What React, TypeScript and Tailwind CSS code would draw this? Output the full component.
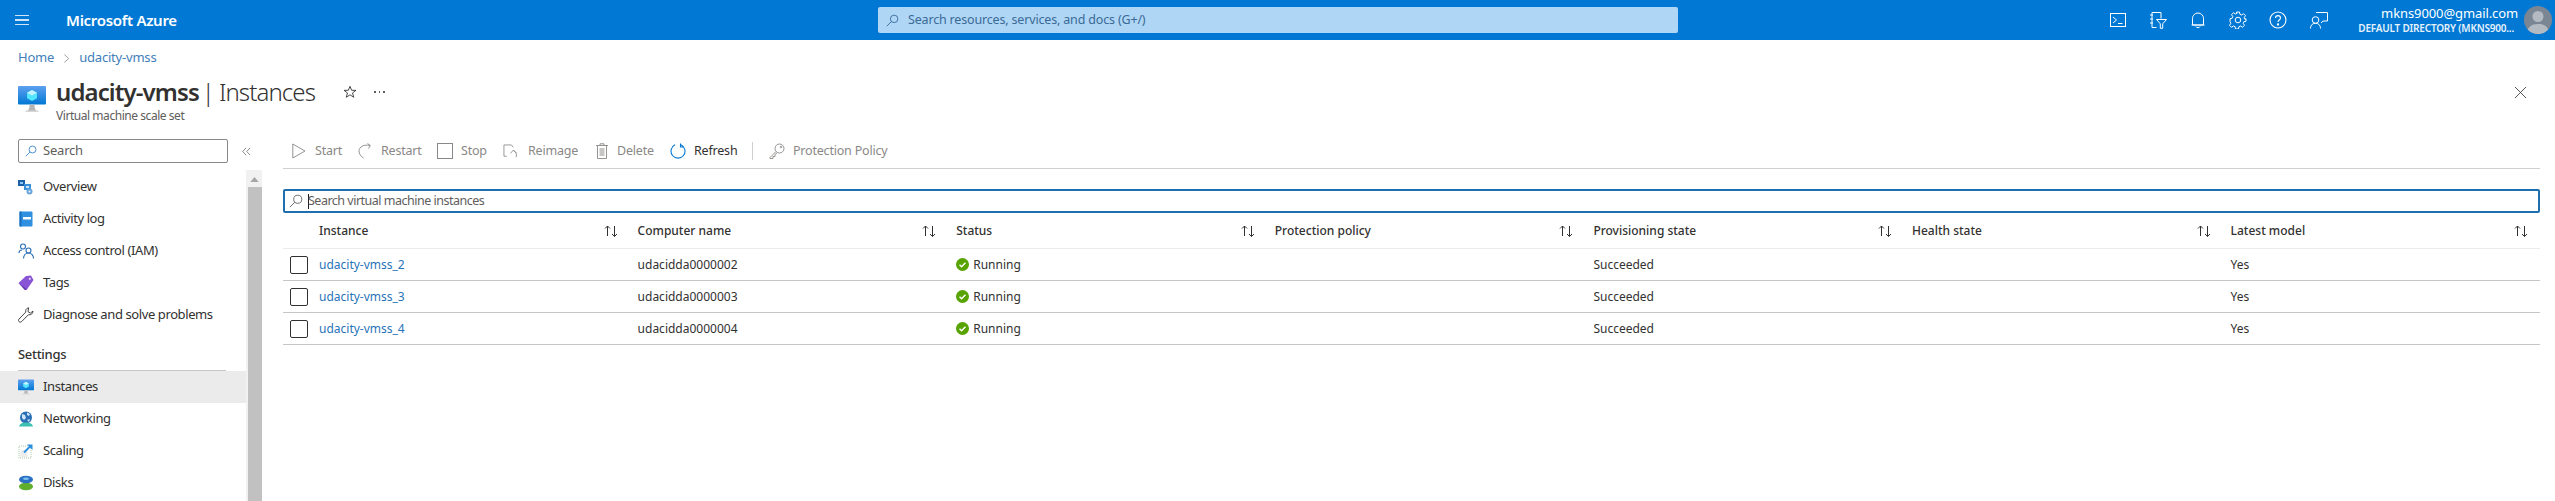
import React from "react";

const FONT = "font-['Noto_Sans','Open_Sans',sans-serif]";

function SearchGlass({ className = "", color = "#323130" }: { className?: string; color?: string }) {
  return (
    <svg viewBox="0 0 16 16" className={className} fill="none" stroke={color} strokeWidth="1">
      <circle cx="10" cy="6" r="4.6" />
      <path d="M6.7 9.3 1 15" />
    </svg>
  );
}

function SortIcon() {
  return (
    <svg viewBox="0 0 16 14" className="w-4 h-[14px] shrink-0" fill="none" stroke="#323130" strokeWidth="1">
      <path d="M4.5 12V2M2 4.5 4.5 2 7 4.5" />
      <path d="M11.5 2v10.5M9 10l2.5 2.5L14 10" />
    </svg>
  );
}

function MonitorIcon({ className = "" }: { className?: string }) {
  return (
    <svg viewBox="0 0 28 28" className={className}>
      <defs>
        <linearGradient id="mon" x1="0" y1="0" x2="0" y2="1">
          <stop offset="0" stopColor="#5ea0ef" />
          <stop offset="1" stopColor="#0078d4" />
        </linearGradient>
      </defs>
      <rect x="0" y="1" width="28" height="18.5" rx="1" fill="url(#mon)" />
      <path d="M9 26c2-1 2.5-3 2.5-6.500h5c0 3.500.5 5.500 2.500 6.500z" fill="#b6b6b6" />
      <rect x="7.500" y="25.500" width="13" height="1.500" fill="#d6d6d6" />
      <path d="M14 5l5 2.800v5.400L14 16l-5-2.800V7.800z" fill="#50e6ff" />
      <path d="M14 5l5 2.800-5 2.800-5-2.800z" fill="#c3f1ff" />
    </svg>
  );
}

const navIcons: Record<string, React.ReactNode> = {
  Overview: (
    <svg viewBox="0 0 16 16" className="w-4 h-4">
      <rect x="0" y="1" width="7" height="6" fill="#1b5fa8" />
      <rect x="2" y="3" width="3" height="2" fill="#8fc8f5" />
      <rect x="6" y="5" width="7" height="6" fill="#3b8fd9" />
      <rect x="8" y="7" width="3" height="2" fill="#c9e6fb" />
      <circle cx="11.500" cy="12.500" r="3" fill="#6aa6dd" />
      <circle cx="11.500" cy="12.500" r="1" fill="#e6f3fc" />
    </svg>
  ),
  "Activity log": (
    <svg viewBox="0 0 16 16" className="w-4 h-4">
      <rect x="1.500" y="0.500" width="13" height="15" rx="1" fill="#2f8fe0" />
      <rect x="1.500" y="0.500" width="2" height="15" fill="#1a6fc0" />
      <rect x="5" y="6" width="8" height="2.500" fill="#ffffff" />
    </svg>
  ),
  "Access control (IAM)": (
    <svg viewBox="0 0 16 16" className="w-4 h-4" fill="none" stroke="#2a6fb5" strokeWidth="1.100">
      <circle cx="5" cy="3.500" r="2.500" />
      <circle cx="10.500" cy="7.500" r="2.500" />
      <path d="M1 10c0-2 1-3 3-3" />
      <path d="M5.500 15.500c0-3 2-5.500 5-5.500s5 2.500 5 5.500" />
    </svg>
  ),
  Tags: (
    <svg viewBox="0 0 16 16" className="w-4 h-4">
      <path d="M0.500 8 8 1l5-.5 2.500 4.500L9 14.500 7 15z" fill="#8a54d6" />
      <path d="M0.500 8 9 14.500 7 15z" fill="#5e2fa8" />
      <circle cx="11.800" cy="3.800" r="1.100" fill="#e6dbf7" />
    </svg>
  ),
  "Diagnose and solve problems": (
    <svg viewBox="0 0 16 16" className="w-4 h-4" fill="none" stroke="#323130" strokeWidth="0.900">
      <path d="M10.500.8c-2 .3-3.300 2.200-2.700 4.300L1 12c-.8 1-.6 2 0 2.600s1.700.8 2.600 0l6.900-6.900c2.200.6 4.500-1 4.500-3.600l-2.700 2-2.300-1.400.6-3.900z" />
    </svg>
  ),
  Instances: <MonitorIcon className="w-4 h-4" />,
  Networking: (
    <svg viewBox="0 0 16 16" className="w-4 h-4">
      <circle cx="8" cy="6.500" r="6" fill="#2a6fb5" />
      <path d="M4 3l3 1 1 3-2 2-2-2zM9 1.500l3 1.500-1 2-2-1zM9 9l3-1-1 3z" fill="#cfe6f8" />
      <path d="M1 15.500c1-3 3-4 7-4s6 1 7 4z" fill="#3cc0b0" />
    </svg>
  ),
  Scaling: (
    <svg viewBox="0 0 16 16" className="w-4 h-4" fill="none">
      <rect x="1" y="3" width="12" height="12" stroke="#a8c8a0" strokeWidth="1" strokeDasharray="1 1" />
      <rect x="2.500" y="7" width="7" height="7" fill="#ececec" />
      <path d="M6 9.500 13 2.500" stroke="#2b8fe0" strokeWidth="1.800" />
      <path d="M9 1.500h5.500V7z" fill="#2b8fe0" />
    </svg>
  ),
  Disks: (
    <svg viewBox="0 0 16 16" className="w-4 h-4">
      <ellipse cx="8" cy="11.500" rx="7" ry="3.800" fill="#5fae2e" />
      <ellipse cx="8" cy="4.500" rx="7" ry="3.800" fill="#2a6fc4" />
      <ellipse cx="8" cy="3.800" rx="3" ry="1.200" fill="#7cc0f0" />
    </svg>
  ),
};

function NavItem({ label, active = false }: { label: string; active?: boolean }) {
  return (
    <div className={`h-8 flex items-center pl-[18px] ${active ? "bg-[#ebebeb]" : ""}`}>
      <span className="w-[25px] shrink-0 flex">{navIcons[label]}</span>
      <span className="text-[13px] tracking-[-0.4px] text-[#323130] whitespace-nowrap">{label}</span>
    </div>
  );
}

const gray = "#8a8886";

function ToolItem({ icon, label, iconW, gap, w, dark = false }: { icon: React.ReactNode; label: string; iconW: string; gap: string; w: string; dark?: boolean }) {
  return (
    <div className={`flex items-center shrink-0 ${w}`}>
      <span className={`flex justify-center shrink-0 ${iconW} ${gap}`}>{icon}</span>
      <span className={`text-[12.500px] tracking-[-0.200px] whitespace-nowrap ${dark ? "text-[#323130]" : "text-[#8a8886]"}`}>{label}</span>
    </div>
  );
}

const columns = ["Instance", "Computer name", "Status", "Protection policy", "Provisioning state", "Health state", "Latest model"];
const rows = [
  { n: "udacity-vmss_2", c: "udacidda0000002" },
  { n: "udacity-vmss_3", c: "udacidda0000003" },
  { n: "udacity-vmss_4", c: "udacidda0000004" },
];
const gridCols = "grid grid-cols-[36px_repeat(6,318.6px)_1fr]";
const cellText = "text-[12px] text-[#323130] whitespace-nowrap";

function HeaderIcons() {
  const cls = "w-[18px] h-[18px]";
  return (
    <div className="flex items-center gap-[22px] shrink-0">
      <svg viewBox="0 0 18 18" className={cls} fill="none" stroke="#fff" strokeWidth="1">
        <rect x="1.500" y="2.500" width="15" height="13" />
        <path d="M4 6l3.500 3L4 12M9 12.500h4.500" />
      </svg>
      <svg viewBox="0 0 18 18" className={cls} fill="none" stroke="#fff" strokeWidth="1">
        <path d="M3 1.500h9v6M3 1.500v15h4.500" />
        <path d="M1 4h3M1 8h3M1 12h3" />
        <path d="M7.500 8.500h10l-3.800 4.300v4.500h-2.400v-4.500z" />
      </svg>
      <svg viewBox="0 0 18 18" className={cls} fill="none" stroke="#fff" strokeWidth="1">
        <path d="M3.500 14V7.500a5.500 5.500 0 0 1 11 0V14zM2.500 14h13M7 15.500c.3 1.500 3.700 1.500 4 0" />
      </svg>
      <svg viewBox="0 0 18 18" className={cls} fill="none" stroke="#fff" strokeWidth="1">
        <circle cx="9" cy="9" r="2.800" />
        <path d="M7.500 1h3l.4 2.300 1.700.7 1.900-1.300 2 2-1.300 1.900.7 1.700L17 7.700v2.600l-2.100.4-.7 1.700 1.300 1.900-2 2-1.900-1.300-1.700.7-.4 2.300h-3l-.4-2.300-1.700-.7-1.900 1.300-2-2 1.300-1.900-.7-1.700L1 10.300V7.700l2.100-.4.700-1.700L2.500 3.700l2-2 1.900 1.300 1.700-.7z" />
      </svg>
      <svg viewBox="0 0 18 18" className={cls} fill="none" stroke="#fff" strokeWidth="1.100">
        <circle cx="9" cy="9" r="8" />
        <path d="M6.500 7c0-3.200 5-3.200 5 0 0 2-2.500 2-2.500 4" />
        <circle cx="9" cy="13.500" r=".6" fill="#fff" />
      </svg>
      <svg viewBox="0 0 18 18" className="w-[18px] h-[18px] ml-[1px]" fill="none" stroke="#fff" strokeWidth="1">
        <circle cx="5.500" cy="9" r="3.300" />
        <path d="M.5 17.500c0-3.500 2-5.200 5-5.200s5 1.700 5 5.200" />
        <path d="M6 1.500h11.500v8.500h-4.500l-2 2" />
      </svg>
    </div>
  );
}

export default function App() {
  return (
    <div className={`${FONT} w-[2555px] h-[501px] overflow-hidden bg-white flex flex-col`}>
      {/* Top bar */}
      <header className="h-10 shrink-0 bg-[#0078d4] flex items-center text-white">
        <div className="w-[878px] shrink-0 flex items-center pl-[15px]">
          <div className="w-[14px] flex flex-col gap-[3px] mr-[37px]">
            <span className="h-[1.500px] bg-[#cfe4f6]" />
            <span className="h-[1.500px] bg-[#cfe4f6]" />
            <span className="h-[1.500px] bg-[#cfe4f6]" />
          </div>
          <span className="text-[15px] font-semibold tracking-[-0.300px] whitespace-nowrap">Microsoft Azure</span>
        </div>
        <div className="w-[800px] h-[26px] shrink-0 bg-[#b0d6f5] rounded-[2px] flex items-center pl-[8px]">
          <SearchGlass className="w-[13px] h-[13px] mr-[9px]" color="#2b5f8f" />
          <span className="text-[12.500px] tracking-[-0.170px] text-[#3a6a96]">Search resources, services, and docs (G+/)</span>
        </div>
        <div className="flex-1 flex items-center pl-[431px]">
          <HeaderIcons />
          <div className="flex-1 flex flex-col items-end pr-[6px]">
            <span className="text-[13px] leading-[16px] tracking-[-0.100px] whitespace-nowrap">mkns9000@gmail.com</span>
            <span className="text-[10px] leading-[14px] font-semibold tracking-[-0.200px] whitespace-nowrap pr-[4px] text-[#e6f1fb]">DEFAULT DIRECTORY (MKNS900...</span>
          </div>
          <div className="w-7 h-7 rounded-full bg-[#7b8694] overflow-hidden mr-[3px] shrink-0">
            <svg viewBox="0 0 28 28" className="w-7 h-7">
              <circle cx="14" cy="10.500" r="5.500" fill="#b4bac2" />
              <path d="M3 28c0-7 4.500-10 11-10s11 3 11 10z" fill="#b4bac2" />
            </svg>
          </div>
        </div>
      </header>

      {/* Breadcrumb */}
      <div className="h-[36px] shrink-0 flex items-center pl-[18px] text-[13px] tracking-[-0.200px] text-[#3f80ba]">
        <span>Home</span>
        <svg viewBox="0 0 8 12" className="w-[7px] h-[11px] mx-[9px]" fill="none" stroke="#8a8886" strokeWidth="0.900">
          <path d="M1.500 1.500 6.500 6l-5 4.500" />
        </svg>
        <span>udacity-vmss</span>
      </div>

      {/* Title */}
      <div className="h-[50px] shrink-0 flex pl-[18px] pr-[28px] relative">
        <MonitorIcon className="w-[28px] h-[28px] mt-[9px] mr-[10px] shrink-0" />
        <div className="flex flex-col">
          <div className="flex items-center h-[32px]">
            <span className="text-[24px] font-semibold tracking-[-0.900px] text-[#323130] whitespace-nowrap">udacity-vmss</span>
            <span className="text-[24px] font-light text-[#323130] ml-[3px] mr-[4px]">|</span>
            <span className="text-[24px] font-light tracking-[-0.900px] text-[#323130] whitespace-nowrap">Instances</span>
            <svg viewBox="0 0 16 16" className="w-[14px] h-[14px] ml-[28px]" fill="none" stroke="#323130" strokeWidth="1">
              <path d="M8 1.500 9.900 6.100h4.900l-3.900 3 1.400 4.900L8 11.200 3.700 14l1.400-4.900-3.900-3h4.900z" />
            </svg>
            <span className="flex gap-[3px] ml-[17px]">
              <span className="w-[1.500px] h-[1.500px] bg-[#605e5c]" />
              <span className="w-[1.500px] h-[1.500px] bg-[#605e5c]" />
              <span className="w-[1.500px] h-[1.500px] bg-[#605e5c]" />
            </span>
          </div>
          <span className="text-[12px] leading-[14px] tracking-[-0.450px] text-[#605e5c] whitespace-nowrap mt-[1px]">Virtual machine scale set</span>
        </div>
        <svg viewBox="0 0 14 14" className="w-[13px] h-[13px] ml-auto mt-[10px]" fill="none" stroke="#323130" strokeWidth="0.900">
          <path d="M1 1l12 12M13 1 1 13" />
        </svg>
      </div>

      {/* Body */}
      <div className="flex-1 flex min-h-0 pt-[13px]">
        {/* Sidebar */}
        <aside className="w-[262px] shrink-0 flex flex-col">
          <div className="h-[24px] flex items-center shrink-0">
            <div className="ml-[18px] w-[210px] h-[24px] border border-[#8a8886] rounded-[2px] flex items-center pl-[6px]">
              <SearchGlass className="w-[12px] h-[12px] mr-[6px]" color="#1a6fc0" />
              <span className="text-[13px] tracking-[-0.200px] text-[#605e5c]">Search</span>
            </div>
            <svg viewBox="0 0 10 10" className="w-[9px] h-[9px] ml-[14px]" fill="none" stroke="#605e5c" strokeWidth="0.800">
              <path d="M4.500 1 .8 5l3.700 4M9 1 5.300 5 9 9" />
            </svg>
          </div>
          <div className="flex-1 flex min-h-0 mt-[7px]">
            <nav className="w-[246px] shrink-0 flex flex-col pt-[1px]">
              <NavItem label="Overview" />
              <NavItem label="Activity log" />
              <NavItem label="Access control (IAM)" />
              <NavItem label="Tags" />
              <NavItem label="Diagnose and solve problems" />
              <div className="h-[32px] shrink-0 flex items-end pl-[18px]">
                <span className="text-[13px] tracking-[-0.300px] text-[#323130] font-medium leading-[18px]">Settings</span>
              </div>
              <div className="h-[1px] shrink-0 bg-[#c8c6c4] ml-[18px] mr-[20px] mt-[7px]" />
              <NavItem label="Instances" active />
              <NavItem label="Networking" />
              <NavItem label="Scaling" />
              <NavItem label="Disks" />
            </nav>
            <div className="w-[16px] shrink-0 bg-[#f1f1f1] flex flex-col items-center pl-[1px]">
              <svg viewBox="0 0 10 6" className="w-[9px] h-[5px] mt-[7px] mb-[5px] shrink-0">
                <path d="M5 0l5 6H0z" fill="#a6a6a6" />
              </svg>
              <div className="w-[14px] flex-1 bg-[#c1c1c1]" />
            </div>
          </div>
        </aside>

        {/* Main */}
        <main className="flex-1 min-w-0 pl-[21px] pr-[15px] flex flex-col">
          <div className="h-[30px] shrink-0 flex items-center pl-[9px] border-b border-[#d2d0ce] pb-[5px]">
            <ToolItem w="w-[66px]" iconW="w-[14px]" gap="mr-[9px]" label="Start" icon={
              <svg viewBox="0 0 14 16" className="w-[14px] h-[16px]" fill="none" stroke={gray} strokeWidth="0.900"><path d="M.8 1v14L13 8z" /></svg>
            } />
            <ToolItem w="w-[79px]" iconW="w-[15px]" gap="mr-[8px]" label="Restart" icon={
              <svg viewBox="0 0 15 16" className="w-[15px] h-[16px]" fill="none" stroke={gray} strokeWidth="0.900"><path d="M12 2.500C6 1 1 4 1 8c0 3 2 5.500 4.500 7M9.500 .5 12.300 2.500 10.500 5.500" /></svg>
            } />
            <ToolItem w="w-[66px]" iconW="w-[16px]" gap="mr-[8px]" label="Stop" icon={
              <span className="w-[16px] h-[16px] border-[1.500px] border-[#8a8886] block" />
            } />
            <ToolItem w="w-[92px]" iconW="w-[15px]" gap="mr-[10px]" label="Reimage" icon={
              <svg viewBox="0 0 16 16" className="w-[15px] h-[15px]" fill="none" stroke={gray} strokeWidth="0.900"><path d="M9 1H1v12h3M9 1l2 2.500M8 10l3-3.500 3.500 3.500M11 7c3 1 4 4 3 7" /></svg>
            } />
            <ToolItem w="w-[75px]" iconW="w-[14px]" gap="mr-[8px]" label="Delete" icon={
              <svg viewBox="0 0 14 16" className="w-[14px] h-[16px]" fill="none" stroke={gray} strokeWidth="0.900"><path d="M1 2.500h12M5 2.500V.8h4v1.700M2.500 2.500v13h9v-13" /><rect x="4.500" y="5" width="5" height="8" fill="#c8c6c4" stroke="none" /></svg>
            } />
            <ToolItem w="w-[82px]" iconW="w-[16px]" gap="mr-[8px]" label="Refresh" dark icon={
              <svg viewBox="0 0 16 16" className="w-[16px] h-[16px]" fill="none" stroke="#0078d4" strokeWidth="1.100"><path d="M5 1.800A7 7 0 1 0 11 1.800M10.500 .5v3.500h3.500" /></svg>
            } />
            <span className="w-[1px] h-[18px] bg-[#d2d0ce] mr-[16px] shrink-0" />
            <ToolItem w="w-[130px]" iconW="w-[16px]" gap="mr-[8px]" label="Protection Policy" icon={
              <svg viewBox="0 0 16 16" className="w-[16px] h-[16px]" fill="none" stroke={gray} strokeWidth="0.900"><circle cx="10.500" cy="5.500" r="4.500" /><path d="M7 8.500 1 14.500V15.500h3v-2h2v-2l2-1.500" /><circle cx="12" cy="4" r=".8" /></svg>
            } />
          </div>

          <div className="mt-[20px] h-[24px] shrink-0 border-2 border-[#1f6fae] rounded-[2px] flex items-center pl-[4px]">
            <SearchGlass className="w-[14px] h-[14px]" color="#605e5c" />
            <span className="w-[1px] h-[15px] bg-[#201f1e] ml-[5px] shrink-0" />
            <span className="text-[12.500px] tracking-[-0.500px] text-[#605e5c] -ml-[1px]">Search virtual machine instances</span>
          </div>

          <div className={`${gridCols} h-[36px] shrink-0 items-center border-b border-[#edebe9]`}>
            <span />
            {columns.map((c, i) => (
              <div key={c} className={`flex items-center justify-between ${i === 6 ? "pr-[11px]" : "pr-[19px]"}`}>
                <span className="text-[12px] font-medium text-[#323130] whitespace-nowrap">{c}</span>
                <SortIcon />
              </div>
            ))}
          </div>
          {rows.map((r) => (
            <div key={r.n} className={`${gridCols} h-[32px] shrink-0 items-center border-b border-[#c8c6c4]`}>
              <div className="pl-[7px] flex">
                <span className="w-[18px] h-[18px] border border-[#323130] rounded-[2px] block" />
              </div>
              <span className="text-[12px] text-[#2a74b8] whitespace-nowrap">{r.n}</span>
              <span className={cellText}>{r.c}</span>
              <div className="flex items-center gap-[4px]">
                <svg viewBox="0 0 14 14" className="w-[13px] h-[13px] shrink-0">
                  <circle cx="7" cy="7" r="7" fill="#57a300" />
                  <path d="M3.800 7.200 6 9.400l4.200-4.400" fill="none" stroke="#fff" strokeWidth="1.600" />
                </svg>
                <span className={cellText}>Running</span>
              </div>
              <span />
              <span className={cellText}>Succeeded</span>
              <span />
              <span className={cellText}>Yes</span>
            </div>
          ))}
        </main>
      </div>
    </div>
  );
}
